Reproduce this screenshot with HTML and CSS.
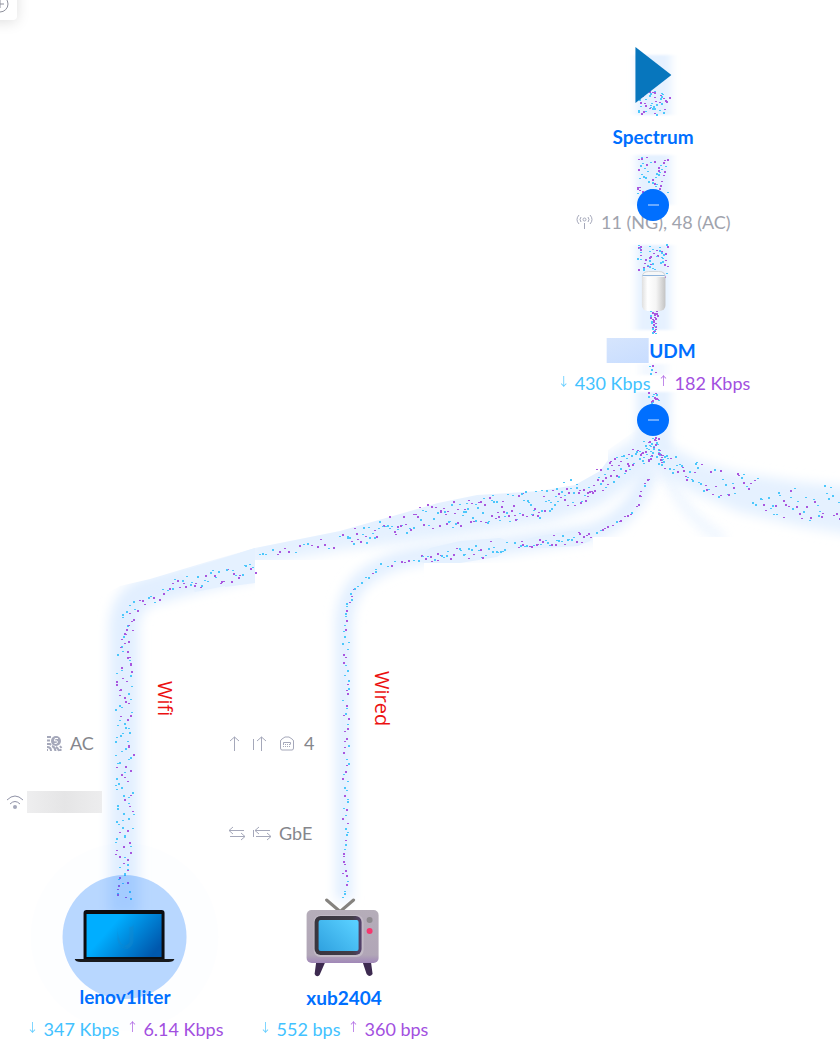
FILE: index.html
```
<!DOCTYPE html>
<html lang="en">
<head>
<meta charset="utf-8">
<title>Network topology</title>
<link rel="stylesheet" href="styles.css">
</head>
<body>
<main class="topology">
  <svg class="links" width="840" height="1053" aria-hidden="true">
    <defs>
      <filter id="soft" x="-20%" y="-20%" width="140%" height="140%"><feGaussianBlur stdDeviation="6"/></filter>
      <filter id="trunk-soft" x="-50%" y="-20%" width="200%" height="140%"><feGaussianBlur stdDeviation="4 1"/></filter>
      <clipPath id="wifi-clip"><path d="M60 620L120 586L150 579L170 573L210 561L255 548L300 539L340 531L400 514L438 503L477 495L540 491L575 485L600 471L608 460V450L636 430H680V560H255V920H60Z"/></clipPath>
      <clipPath id="lan-clip"><path d="M300 930V500H600V440H840V537H593V563H424V930Z"/></clipPath>
    </defs>
    <g class="band">
      <g clip-path="url(#wifi-clip)">
        <path class="wide" filter="url(#soft)" d="M124 915V630Q124 594 158 588Q205 574 255 565"/>
        <path filter="url(#soft)" d="M250 538L340 520L438 492L540 480L600 460L640 435L665 450L640 478L600 505L550 522L450 537L340 550L250 566Z"/>
      </g>
      <path d="M180 572L255 548V580L195 592Z" clip-path="url(#wifi-clip)"/>
      <path d="M225 558L255 548V583L225 587Z"/>
      <g clip-path="url(#lan-clip)">
        <path class="narrow" filter="url(#soft)" d="M344 900V625Q344 592 368 575T430 554L510 545L590 533Q635 520 650 468"/>
        <path class="faint" filter="url(#soft)" d="M664 468Q682 515 724 540"/>
      </g>
      <path filter="url(#soft)" d="M640 432L670 446L700 462L740 473L800 482L860 488V536L800 526L740 512L700 495L660 474L640 460Z"/>
      <path d="M415 560L430 548L460 541L500 538L509 541V549L497 557L460 563H424ZM512 543L540 536L570 531L590 529L594 534L590 541L578 546L545 548H512Z"/>
      <path filter="url(#trunk-soft)" d="M636 55H671V115H636ZM636 155H671V205H636ZM636 245H671V330H636ZM636 392H671V450H636Z"/>
      <path class="faint-fill" filter="url(#trunk-soft)" d="M640 364H667V375H640Z"/>
    </g>
    <g id="traffic"></g>
  </svg>

  <div class="tool-corner"><button type="button" class="tool-button" aria-label="Zoom in">
    <svg width="18" height="18" viewBox="0 0 18 18"><circle cx="9" cy="9" r="8"/><path d="M9 5V13M5 9H13"/></svg>
  </button></div>

  <section class="node isp">
    <svg width="37" height="56" viewBox="0 0 37 56" aria-hidden="true"><path d="M1 0L37 28L1 56Z" fill="#0776bd"/></svg>
    <h2>Spectrum</h2>
  </section>

  <div class="meta channels">
    <svg width="17" height="16" viewBox="0 0 17 16" aria-hidden="true"><path d="M3 1Q-1 5.500 3 10M14 1Q18 5.500 14 10M5 3Q3 5.500 5 8M12 3Q14 5.500 12 8M8.500 9V15"/><circle cx="8.500" cy="5.500" r="1.500"/></svg>
    <span>11 (NG), 48 (AC)</span>
  </div>
  <button type="button" class="collapse first" aria-label="Collapse Spectrum"></button>

  <section class="node gateway">
    <svg width="24" height="40" viewBox="0 0 24 40" aria-hidden="true">
      <defs><linearGradient id="udm"><stop offset="0" stop-color="#dedede"/><stop offset=".25" stop-color="#fff"/><stop offset=".6" stop-color="#f5f5f5"/><stop offset="1" stop-color="#c2c2c2"/></linearGradient></defs>
      <rect width="24" height="40" rx="6" fill="url(#udm)"/><path d="M.5 6Q1 .5 7 .5H17Q23 .5 23.500 6" fill="#f6f7f8" stroke="#d4d8dc"/><path d="M1 4.500H23" stroke="#8fb4dc"/>
    </svg>
    <h2><span class="masked"></span>UDM</h2>
    <p class="rates"><span class="down"><i>↓</i>430 Kbps</span><span class="up"><i>↑</i>182 Kbps</span></p>
  </section>
  <button type="button" class="collapse second" aria-label="Collapse UDM"></button>

  <span class="link-name wifi">Wifi</span>
  <span class="link-name wired">Wired</span>

  <div class="meta radio">
    <svg width="15" height="15" viewBox="0 0 15 15" aria-hidden="true"><circle cx="9" cy="5" r="5" class="solid"/><path class="knock" d="M11 2.500H8L7.500 5Q10.500 4 10.500 6T7.500 7.500"/><path class="bold" d="M0 1H4M0 4.500H3M0 8H3L4 9M0 11Q4 11 4 15M5 10Q8 11 8.500 15M9 11Q11 12 12 15M13 10L14.500 12M13.500 13V15M0 14H1"/></svg>
    <span>AC</span>
  </div>
  <div class="meta ssid">
    <svg width="18" height="14" viewBox="0 0 18 14" aria-hidden="true"><path class="arc" d="M1 5Q9 -3 17 5M4 9Q9 4 14 9"/><circle class="solid" cx="9" cy="12" r="2"/></svg>
    <span class="masked-grey"></span>
  </div>
  <div class="meta port">
    <svg width="9" height="15" viewBox="0 0 9 15" aria-hidden="true"><path d="M4.500 15V1M0 5L4.500 1L9 5"/></svg>
    <svg width="13" height="15" viewBox="0 0 13 15" aria-hidden="true"><path d="M.5 3V14M8.500 15V1M4 5L8.500 1L13 5"/></svg>
    <svg width="14" height="15" viewBox="0 0 14 15" aria-hidden="true"><path d="M.5 5Q.5 4 2 3L5 1H9L12 3Q13.500 4 13.500 5V12Q13.500 14 12 14H2Q.5 14 .5 12ZM3.500 8.500V6.500H10.500V8.500"/><path stroke-dasharray="1 1" d="M3 8.500H11M3 10.500H11"/></svg>
    <span>4</span>
  </div>
  <div class="meta speed">
    <svg width="16" height="13" viewBox="0 0 16 13" aria-hidden="true"><path d="M4 0L0 3.500H15M0 3.500L4 7M12 6L16 9.500H1M16 9.500L12 13"/></svg>
    <svg width="18" height="13" viewBox="0 0 18 13" aria-hidden="true"><path d="M.5 3V10M6 0L2 3.500H17M2 3.500L6 7M14 6L18 9.500H3M18 9.500L14 13"/></svg>
    <span>GbE</span>
  </div>

  <section class="node laptop">
    <div class="halo">
      <svg width="100" height="54" viewBox="0 0 100 54" aria-hidden="true">
        <defs><linearGradient id="screen" x1="0" y1="0.200" x2="1" y2="0.700"><stop offset=".3" stop-color="#00aeff"/><stop offset="1" stop-color="#0058ad"/></linearGradient></defs>
        <path d="M9 3Q9 0 12 0H87Q90 0 90 3V50H9Z" fill="#0c0d10"/><rect x="12" y="4" width="75" height="43" fill="url(#screen)"/>
        <path d="M0 49H100Q99 52 94 52H6Q1 52 0 49Z" fill="#181a1e"/>
        <path d="M43 17V30Q44 38 53 38Q43 35 43 17M55 17Q59 17 59 14V30Q59 36 53 39Q46 39 44 33Q50 39 55 32Z" fill="#1686ca" opacity=".4"/>
      </svg>
    </div>
    <h2>lenov1liter</h2>
    <p class="rates"><span class="down"><i>↓</i>347 Kbps</span><span class="up"><i>↑</i>6.14 Kbps</span></p>
  </section>

  <section class="node tv">
    <svg width="74" height="79" viewBox="0 0 74 79" aria-hidden="true">
      <defs>
        <linearGradient id="case" x1="0" y1="0" x2="0" y2="1"><stop offset="0" stop-color="#b5adb9"/><stop offset=".85" stop-color="#b1a6b7"/><stop offset="1" stop-color="#a087b8"/></linearGradient>
        <linearGradient id="glass" x1="1" y1=".2" x2="0" y2="1"><stop offset="0" stop-color="#58cfff"/><stop offset="1" stop-color="#2fa1df"/></linearGradient>
        <linearGradient id="frame"><stop offset="0" stop-color="#39353e"/><stop offset=".8" stop-color="#423d48"/><stop offset="1" stop-color="#55416c"/></linearGradient>
      </defs>
      <path d="M21 2L35 14M48 2L34 14" stroke="#85837f" stroke-width="3" stroke-linecap="round"/>
      <path d="M11 61H21L14 77Q11 80 9 76ZM56 61H65L67 76Q64 80 61 76Z" fill="#3d2a50"/>
      <rect x="1" y="12" width="72" height="53" rx="5" fill="url(#case)"/>
      <rect x="8" y="17" width="50" height="42" rx="7" fill="#c2bac6"/>
      <rect x="9" y="18" width="47" height="39" rx="6" fill="url(#frame)"/>
      <rect x="13" y="22" width="40" height="31" rx="2" fill="url(#glass)"/>
      <circle cx="64" cy="22" r="3" fill="#8e8a8f"/><circle cx="64" cy="33" r="3" fill="#f5376e"/>
    </svg>
    <h2>xub2404</h2>
    <p class="rates"><span class="down"><i>↓</i>552 bps</span><span class="up"><i>↑</i>360 bps</span></p>
  </section>
</main>
<script src="traffic.js"></script>
</body>
</html>
```
FILE: styles.css
```
* { box-sizing: border-box; }
body {
  margin: 0;
  background: #fff;
  font-family: Lato, "Open Sans", sans-serif;
  font-size: 18px;
  line-height: 24px;
}
h2, p { margin: 0; }
h2 { font-size: 19px; line-height: 24px; font-weight: 700; color: #006fff; }
.topology { position: relative; min-height: 100vh; overflow: hidden; }
.links { position: absolute; left: 0; top: 0; overflow: visible; }
.band { fill: #e5f1ff; stroke: none; }
.band .wide, .band .narrow, .band .faint { fill: none; stroke: #e2efff; }
.band .wide { stroke-width: 30px; }
.band .narrow { stroke-width: 17px; }
.band .faint { stroke-width: 9px; opacity: .7; }
.band .faint-fill { opacity: .5; }
.dot-down { fill: #4cc7fb; }
.dot-up { fill: #a957df; }

.tool-corner {
  position: absolute; left: -30px; top: -28px;
  width: 47px; height: 48px;
  display: flex; align-items: flex-end; justify-content: flex-end;
  padding: 7px 8px;
  border-radius: 4px; background: #fff;
  box-shadow: 0 2px 14px rgba(0, 0, 0, .13);
}
.tool-button { display: block; padding: 0; border: 0; background: none; line-height: 0; }
.tool-button svg { fill: none; stroke: #8d8f9b; }

.node {
  position: absolute;
  display: flex; flex-direction: column; align-items: center;
  transform: translateX(-50%);
}
.isp { left: 653px; top: 47px; gap: 22px; }
.gateway { left: 654px; top: 271px; }
.gateway h2 { display: flex; align-items: center; margin: 27px 0 8px; padding-right: 6px; }
.masked { width: 42px; height: 25px; margin-right: 1px; background: linear-gradient(160deg, #d6e5fd, #c8ddff); }
.laptop { left: 125px; top: 875px; }
.laptop h2 { margin: -14px 0 8px; }
.tv { left: 344px; top: 898px; }
.tv > svg { margin-right: 2px; }
.tv h2 { margin: 9px 0 7px; }
.halo {
  display: flex; align-items: center; justify-content: center;
  width: 124px; height: 124px; border-radius: 50%;
  background: rgba(0, 111, 255, .28);
  box-shadow: 0 0 0 32px rgba(0, 111, 255, .008);
}
.rates { display: flex; gap: 7px; white-space: nowrap; }
.rates span { display: flex; gap: 5px; }
.rates i { font-family: "Noto Sans CJK SC", "DejaVu Sans", sans-serif; font-style: normal; font-size: 12px; line-height: 20px; width: 12px; text-align: center; opacity: .8; }
.down { color: #42c2ff; }
.up { color: #a24fe0; }

.collapse {
  position: absolute; left: 637px;
  display: flex; align-items: center; justify-content: center;
  width: 32px; height: 32px; padding: 0;
  border: 0; border-radius: 50%; background: #006fff;
}
.collapse::before { content: ""; width: 11px; height: 2px; background: #68a9ff; }
.first { top: 189px; }
.second { top: 404px; }

.link-name {
  position: absolute; writing-mode: vertical-rl;
  font-family: "Open Sans", sans-serif; font-size: 20px; line-height: 22px; color: #ec1010;
}
.wifi { left: 154px; top: 681px; }
.wired { left: 371px; top: 671px; }

.meta { position: absolute; display: flex; align-items: center; gap: 8px; color: #85868c; white-space: nowrap; }
.meta svg { fill: none; stroke: #a5a8ba; overflow: visible; }
.meta .bold { stroke-width: 2px; }
.meta .arc { stroke-width: 1px; stroke: #8f92a6; }
.meta .solid { fill: #a5a8ba; stroke: none; }
.meta .knock { stroke: #fff; }
.channels { left: 576px; top: 210px; color: #a0a3ad; }
.radio { left: 47px; top: 731px; }
.ssid { left: 6px; top: 791px; gap: 3px; }
.masked-grey { width: 75px; height: 22px; background: linear-gradient(90deg, #eeeeef, #e5e5e6 50%, #ededee); }
.port { left: 230px; top: 731px; gap: 14px; }
.port span { margin-left: -4px; }
.speed { left: 229px; top: 821px; }
```
FILE: traffic.js
```
const layer = document.getElementById('traffic');
let seed = 71;
const random = () => {
  seed = (seed * 16807) % 2147483647;
  return seed / 2147483647;
};

// Each stream: [dot count, ...[x, y, half width across x, half width across y]]
const streams = [
  [45, [653, 90, 16, 0], [653, 114, 16, 0]],
  [56, [653, 156, 16, 0], [653, 198, 16, 0]],
  [48, [653, 244, 16, 0], [653, 270, 16, 0]],
  [12, [653, 270, 15, 0], [653, 300, 15, 0]],
  [34, [653, 310, 4, 0], [653, 333, 2, 0]],
  [5, [653, 364, 4, 0], [653, 374, 4, 0]],
  [16, [653, 392, 6, 0], [653, 404, 6, 0]],
  [45, [653, 437, 5, 0], [653, 464, 12, 0]],
  [45, [645, 450, 0, 10], [600, 480, 0, 14]],
  [50, [600, 480, 0, 15], [540, 503, 0, 14]],
  [85, [540, 503, 0, 15], [438, 516, 0, 14]],
  [55, [438, 515, 0, 14], [345, 538, 0, 8]],
  [20, [345, 540, 0, 8], [255, 554, 0, 3]],
  [42, [255, 567, 0, 9], [170, 587, 0, 8]],
  [16, [170, 591, 0, 7], [128, 608, 0, 5]],
  [135, [124, 610, 9, 0], [124, 900, 9, 0]],
  [70, [345, 610, 3, 0], [345, 900, 3, 0]],
  [8, [345, 610, 2, 0], [352, 590, 2, 2]],
  [8, [352, 590, 2, 2], [380, 565, 2, 2]],
  [9, [380, 565, 0, 2], [420, 558, 0, 2]],
  [42, [420, 557, 0, 5], [507, 547, 0, 9]],
  [38, [514, 544, 0, 4], [590, 536, 0, 6]],
  [12, [594, 534, 0, 2], [632, 514, 0, 2]],
  [10, [632, 512, 2, 2], [649, 475, 1, 2]],
  [34, [657, 456, 0, 8], [705, 478, 0, 13]],
  [34, [705, 480, 0, 14], [770, 496, 0, 17]],
  [40, [770, 498, 0, 18], [842, 506, 0, 19]]
];

for (const [count, a, b] of streams) {
  for (let i = 0; i < count; i++) {
    const t = (i + random()) / count;
    const x = a[0] + (b[0] - a[0]) * t + (random() * 2 - 1) * (a[2] + (b[2] - a[2]) * t);
    const y = a[1] + (b[1] - a[1]) * t + (random() * 2 - 1) * (a[3] + (b[3] - a[3]) * t);
    const dot = document.createElementNS('http://www.w3.org/2000/svg', 'rect');
    dot.setAttribute('x', Math.round(x));
    dot.setAttribute('y', Math.round(y));
    dot.setAttribute('width', 2);
    dot.setAttribute('height', i % 2 ? 1 : 2);
    dot.setAttribute('class', random() < 0.5 ? 'dot-down' : 'dot-up');
    layer.append(dot);
  }
}
```
